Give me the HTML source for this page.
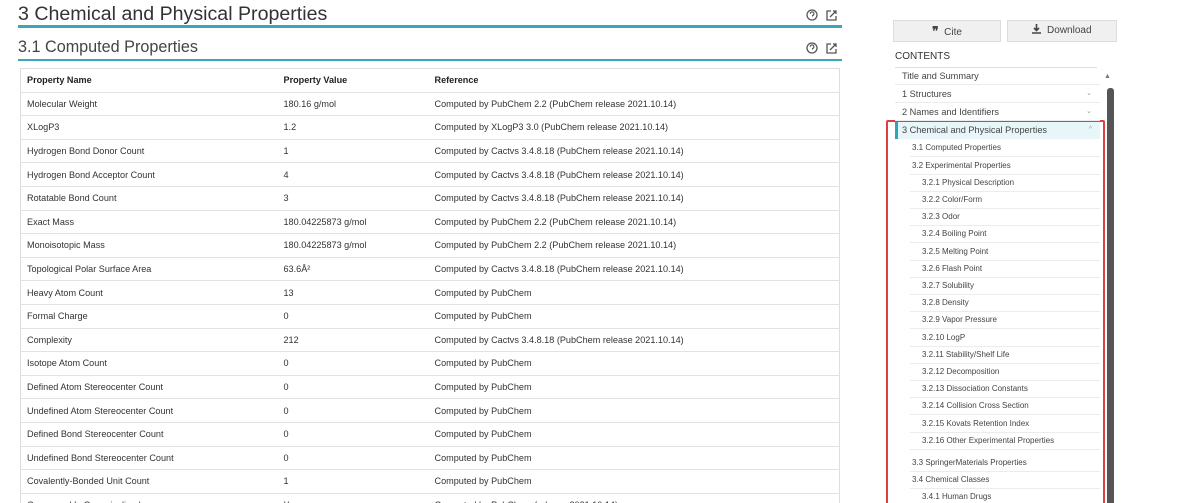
<!DOCTYPE html>
<html><head><meta charset="utf-8"><style>
*{margin:0;padding:0;box-sizing:border-box}
html,body{width:1200px;height:503px;overflow:hidden}
body{background:#fff;font-family:"Liberation Sans",sans-serif;color:#222;position:relative}
.h1{position:absolute;left:18px;top:3px;font-size:19.6px;color:#333}
.u1{position:absolute;left:18px;width:824px;height:3px;background:#3aa6b9}
.h2{position:absolute;left:18px;top:38px;font-size:16.2px;color:#444}
.ic{position:absolute}
table{position:absolute;left:20px;top:68px;width:820px;border-collapse:collapse;font-size:9.1px;border:1px solid #ddd}
td,th{height:23.6px;border-bottom:1px solid #e2e2e2;text-align:left;padding-left:6px;font-weight:normal;color:#333}
th{font-weight:bold;color:#222}
.btn{position:absolute;top:20px;height:22px;background:#f0f0f0;border:1px solid #ddd;font-size:10px;color:#444;text-align:center;line-height:20px}
.toc{position:absolute;left:895px;width:205px;font-size:9.2px;color:#444}
.ti{position:absolute;left:0;width:205px;border-bottom:1px solid #ececec;height:17px;line-height:16px;white-space:nowrap}
.s{font-size:8px}
</style></head><body>
<div class="h1">3 Chemical and Physical Properties</div>
<div class="u1" style="top:25px"></div>
<div class="h2">3.1 Computed Properties</div>
<div class="u1" style="top:59px;height:2px"></div>
<svg class="ic" style="left:805px;top:8px" width="40" height="14" viewBox="0 0 40 14"><circle cx="7" cy="7" r="5" fill="none" stroke="#555" stroke-width="1.3"/><path d="M5.3 5.8a1.8 1.8 0 1 1 2.2 1.7v1" fill="none" stroke="#555" stroke-width="1.1"/><path d="M26 3h-4v9h9v-4M25 9l6-6M28 3h3v3" fill="none" stroke="#555" stroke-width="1.3"/></svg>
<svg class="ic" style="left:805px;top:41px" width="40" height="14" viewBox="0 0 40 14"><circle cx="7" cy="7" r="5" fill="none" stroke="#555" stroke-width="1.3"/><path d="M5.3 5.8a1.8 1.8 0 1 1 2.2 1.7v1" fill="none" stroke="#555" stroke-width="1.1"/><path d="M26 3h-4v9h9v-4M25 9l6-6M28 3h3v3" fill="none" stroke="#555" stroke-width="1.3"/></svg>
<table>
<tr><th style="width:257px">Property Name</th><th style="width:151px">Property Value</th><th>Reference</th></tr>
<tr><td>Molecular Weight</td><td>180.16 g/mol</td><td>Computed by PubChem 2.2 (PubChem release 2021.10.14)</td></tr>
<tr><td>XLogP3</td><td>1.2</td><td>Computed by XLogP3 3.0 (PubChem release 2021.10.14)</td></tr>
<tr><td>Hydrogen Bond Donor Count</td><td>1</td><td>Computed by Cactvs 3.4.8.18 (PubChem release 2021.10.14)</td></tr>
<tr><td>Hydrogen Bond Acceptor Count</td><td>4</td><td>Computed by Cactvs 3.4.8.18 (PubChem release 2021.10.14)</td></tr>
<tr><td>Rotatable Bond Count</td><td>3</td><td>Computed by Cactvs 3.4.8.18 (PubChem release 2021.10.14)</td></tr>
<tr><td>Exact Mass</td><td>180.04225873 g/mol</td><td>Computed by PubChem 2.2 (PubChem release 2021.10.14)</td></tr>
<tr><td>Monoisotopic Mass</td><td>180.04225873 g/mol</td><td>Computed by PubChem 2.2 (PubChem release 2021.10.14)</td></tr>
<tr><td>Topological Polar Surface Area</td><td>63.6Å²</td><td>Computed by Cactvs 3.4.8.18 (PubChem release 2021.10.14)</td></tr>
<tr><td>Heavy Atom Count</td><td>13</td><td>Computed by PubChem</td></tr>
<tr><td>Formal Charge</td><td>0</td><td>Computed by PubChem</td></tr>
<tr><td>Complexity</td><td>212</td><td>Computed by Cactvs 3.4.8.18 (PubChem release 2021.10.14)</td></tr>
<tr><td>Isotope Atom Count</td><td>0</td><td>Computed by PubChem</td></tr>
<tr><td>Defined Atom Stereocenter Count</td><td>0</td><td>Computed by PubChem</td></tr>
<tr><td>Undefined Atom Stereocenter Count</td><td>0</td><td>Computed by PubChem</td></tr>
<tr><td>Defined Bond Stereocenter Count</td><td>0</td><td>Computed by PubChem</td></tr>
<tr><td>Undefined Bond Stereocenter Count</td><td>0</td><td>Computed by PubChem</td></tr>
<tr><td>Covalently-Bonded Unit Count</td><td>1</td><td>Computed by PubChem</td></tr>
<tr><td>Compound Is Canonicalized</td><td>Yes</td><td>Computed by PubChem (release 2021.10.14)</td></tr>
</table>
<div class="btn" style="left:893px;width:108px"><b style="font-size:12px">❞</b>&nbsp; Cite</div>
<div class="btn" style="left:1007px;width:110px"><svg width="9" height="10" viewBox="0 0 9 10" style="vertical-align:-1px"><path d="M4.5 0v6M2 4l2.5 2.5L7 4M0 9h9" fill="none" stroke="#444" stroke-width="1.6"/></svg>&nbsp; Download</div>
<div style="position:absolute;left:895px;top:51px;font-size:10px;color:#333">CONTENTS</div>
<div style="position:absolute;left:895px;top:67px;width:202px;height:1px;background:#ddd"></div>
<div style="position:absolute;left:1104px;top:73px;font-size:7px;color:#777">▲</div>
<div style="position:absolute;left:1107px;top:88px;width:7px;height:420px;background:#555;border-radius:3px"></div>
<div style="position:absolute;left:886px;top:120px;width:219px;height:400px;border:2px solid #d9423e;border-radius:2px"></div>
<div style="position:absolute;left:895px;top:122px;width:205px;height:17px;background:#e8f6fa;border-left:3px solid #2aa7ba"></div>
<div class="toc" style="top:0">
<div class="ti" style="top:68px;padding-left:7px">Title and Summary</div>
<div class="ti" style="top:86px;padding-left:7px">1 Structures<span style="position:absolute;right:8px;font-size:7px;color:#999">⌄</span></div>
<div class="ti" style="top:104px;padding-left:7px">2 Names and Identifiers<span style="position:absolute;right:8px;font-size:7px;color:#999">⌄</span></div>
<div class="ti" style="top:122px;padding-left:7px;border:none">3 Chemical and Physical Properties<span style="position:absolute;right:8px;font-size:7px;color:#999">^</span></div>
</div>
<div class="toc s" style="top:0;left:910px;width:190px">
<div class="ti s" style="top:140px;padding-left:2px;width:190px">3.1 Computed Properties</div>
<div class="ti s" style="top:158px;padding-left:2px;width:190px">3.2 Experimental Properties</div>
<div class="ti s" style="top:175px;padding-left:12px;width:190px">3.2.1 Physical Description</div>
<div class="ti s" style="top:192px;padding-left:12px;width:190px">3.2.2 Color/Form</div>
<div class="ti s" style="top:209px;padding-left:12px;width:190px">3.2.3 Odor</div>
<div class="ti s" style="top:226px;padding-left:12px;width:190px">3.2.4 Boiling Point</div>
<div class="ti s" style="top:244px;padding-left:12px;width:190px">3.2.5 Melting Point</div>
<div class="ti s" style="top:261px;padding-left:12px;width:190px">3.2.6 Flash Point</div>
<div class="ti s" style="top:278px;padding-left:12px;width:190px">3.2.7 Solubility</div>
<div class="ti s" style="top:295px;padding-left:12px;width:190px">3.2.8 Density</div>
<div class="ti s" style="top:312px;padding-left:12px;width:190px">3.2.9 Vapor Pressure</div>
<div class="ti s" style="top:330px;padding-left:12px;width:190px">3.2.10 LogP</div>
<div class="ti s" style="top:347px;padding-left:12px;width:190px">3.2.11 Stability/Shelf Life</div>
<div class="ti s" style="top:364px;padding-left:12px;width:190px">3.2.12 Decomposition</div>
<div class="ti s" style="top:381px;padding-left:12px;width:190px">3.2.13 Dissociation Constants</div>
<div class="ti s" style="top:398px;padding-left:12px;width:190px">3.2.14 Collision Cross Section</div>
<div class="ti s" style="top:416px;padding-left:12px;width:190px">3.2.15 Kovats Retention Index</div>
<div class="ti s" style="top:433px;padding-left:12px;width:190px">3.2.16 Other Experimental Properties</div>
<div class="ti s" style="top:455px;padding-left:2px;width:190px">3.3 SpringerMaterials Properties</div>
<div class="ti s" style="top:472px;padding-left:2px;width:190px">3.4 Chemical Classes</div>
<div class="ti s" style="top:489px;padding-left:12px;width:190px">3.4.1 Human Drugs</div>
</div>
</body></html>
